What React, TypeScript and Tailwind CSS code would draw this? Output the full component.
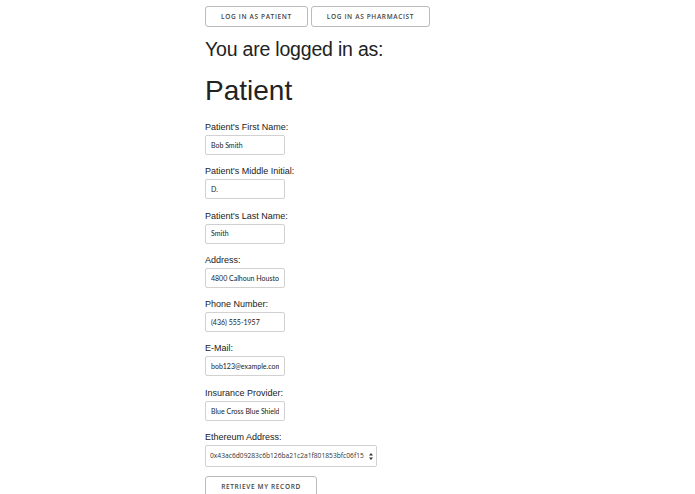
const fields = [
  { label: "Patient's First Name:", value: "Bob Smith" },
  { label: "Patient's Middle Initial:", value: "D." },
  { label: "Patient's Last Name:", value: "Smith" },
  { label: "Address:", value: "4800 Calhoun Houston" },
  { label: "Phone Number:", value: "(436) 555-1957" },
  { label: "E-Mail:", value: "bob123@example.com" },
  { label: "Insurance Provider:", value: "Blue Cross Blue Shield" },
];

const btn =
  "h-[21px] border border-[#bbb] rounded-[3px] bg-white text-[6.5px] font-semibold tracking-[0.1em] uppercase text-[#444] font-['Open_Sans',sans-serif] flex items-center justify-center";

export default function App() {
  return (
    <div className="w-full h-[494px] overflow-hidden bg-white pl-[205px] pt-[6px] text-[#222] font-['Liberation_Sans',Arial,sans-serif]">
      {/* Login switch */}
      <div className="flex gap-[3px]">
        <button className={`${btn} w-[103px]`}>Log in as Patient</button>
        <button className={`${btn} w-[119px]`}>Log in as Pharmacist</button>
      </div>

      <h2 className="mt-[10px] text-[19.5px] leading-[24px] tracking-[-0.2px]">You are logged in as:</h2>
      <h1 className="mt-[13px] text-[28px] leading-[34px]">Patient</h1>

      <form className="mt-[13px]">
        {fields.map((f) => (
          <div key={f.label} className="mb-[10.3px]">
            <label className="block h-[12px] text-[9px] leading-[12px] mb-[2px]">{f.label}</label>
            <div className="w-[80px] h-[20px] border border-[#d1d1d1] rounded-[2px] px-[5px] flex items-center">
              <div className="overflow-hidden whitespace-nowrap text-[7px] text-[#222] font-['Lato',sans-serif]">
                {f.value}
              </div>
            </div>
          </div>
        ))}

        <div>
          <label className="block h-[12px] text-[9px] leading-[12px] mb-[2px]">Ethereum Address:</label>
          <div className="w-[172px] h-[22px] border border-[#d1d1d1] rounded-[2px] pl-[4px] pr-[3px] flex items-center justify-between whitespace-nowrap text-[6.7px] text-[#333] font-['Open_Sans',sans-serif]">
            <span>0x43ac6d09283c6b126ba21c2a1f801853bfc06f15</span>
            <svg width="4" height="7" viewBox="0 0 4 7" className="shrink-0">
              <path d="M2 0 L4 2.6 H0 Z M2 7 L4 4.4 H0 Z" fill="#333" />
            </svg>
          </div>
        </div>

        <button type="button" className={`${btn} w-[112px] mt-[9px]`}>Retrieve my record</button>
      </form>
    </div>
  );
}
